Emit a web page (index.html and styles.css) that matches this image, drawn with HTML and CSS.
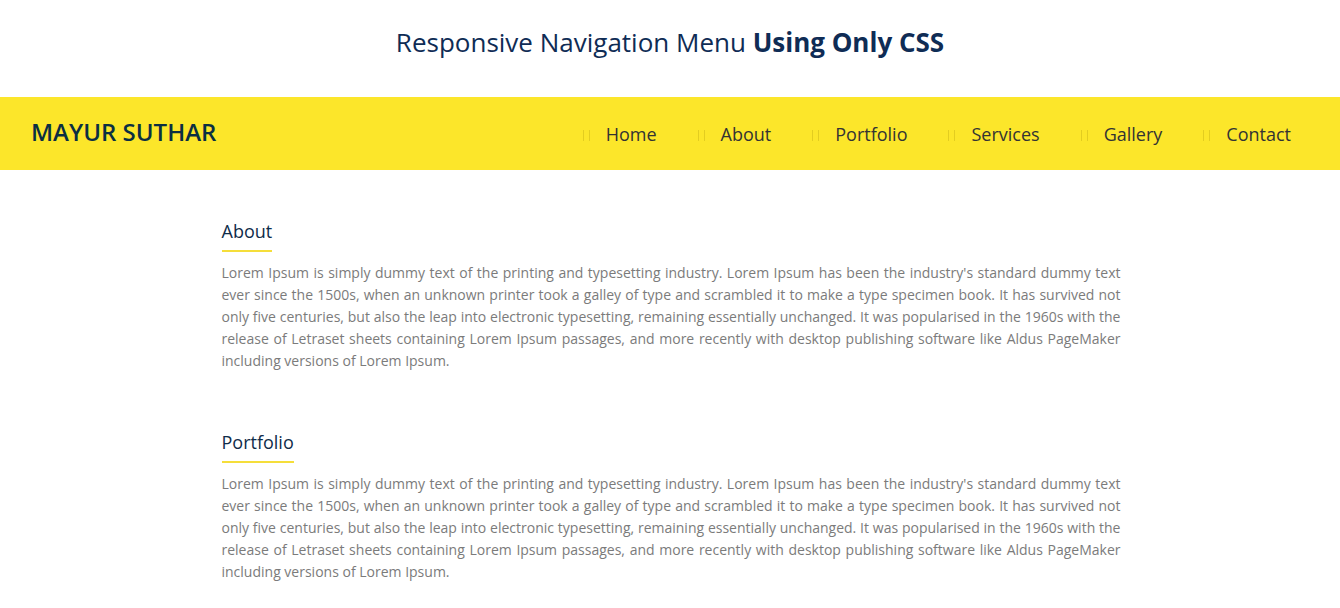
FILE: index.html
```html
<!DOCTYPE html>
<html lang="en">
<head>
<meta charset="utf-8">
<title>Responsive Navigation Menu</title>
<link rel="stylesheet" href="styles.css">
</head>
<body>
<h1 class="page-title">Responsive Navigation Menu <strong>Using Only CSS</strong></h1>
<nav class="navbar">
  <div class="logo">MAYUR SUTHAR</div>
  <ul class="menu">
    <li class="menu-item"><span class="sep"></span><a href="#">Home</a></li>
    <li class="menu-item"><span class="sep"></span><a href="#">About</a></li>
    <li class="menu-item"><span class="sep"></span><a href="#">Portfolio</a></li>
    <li class="menu-item"><span class="sep"></span><a href="#">Services</a></li>
    <li class="menu-item"><span class="sep"></span><a href="#">Gallery</a></li>
    <li class="menu-item"><span class="sep"></span><a href="#">Contact</a></li>
  </ul>
</nav>
<main class="content">
  <section class="section">
    <h2 class="section-title">About</h2>
    <p class="section-text">Lorem Ipsum is simply dummy text of the printing and typesetting industry. Lorem Ipsum has been the industry's standard dummy text ever since the 1500s, when an unknown printer took a galley of type and scrambled it to make a type specimen book. It has survived not only five centuries, but also the leap into electronic typesetting, remaining essentially unchanged. It was popularised in the 1960s with the release of Letraset sheets containing Lorem Ipsum passages, and more recently with desktop publishing software like Aldus PageMaker including versions of Lorem Ipsum.</p>
  </section>
  <section class="section">
    <h2 class="section-title">Portfolio</h2>
    <p class="section-text">Lorem Ipsum is simply dummy text of the printing and typesetting industry. Lorem Ipsum has been the industry's standard dummy text ever since the 1500s, when an unknown printer took a galley of type and scrambled it to make a type specimen book. It has survived not only five centuries, but also the leap into electronic typesetting, remaining essentially unchanged. It was popularised in the 1960s with the release of Letraset sheets containing Lorem Ipsum passages, and more recently with desktop publishing software like Aldus PageMaker including versions of Lorem Ipsum.</p>
  </section>
</main>
</body>
</html>
```

FILE: styles.css
```css
* { box-sizing: border-box; }
body {
  margin: 0;
  font-family: "Open Sans", "Noto Sans", sans-serif;
  background: #fff;
}
.page-title {
  margin: 0;
  padding: 24px 0 37px;
  text-align: center;
  font-size: 26px;
  line-height: 36px;
  font-weight: 400;
  color: #0f2c55;
}
.page-title strong { font-weight: 700; }
.navbar {
  height: 73px;
  background: #fce62a;
  display: flex;
  align-items: center;
  justify-content: space-between;
  padding: 0 49px 0 31px;
}
.logo {
  font-size: 24px;
  font-weight: 600;
  color: #0b2f42;
  line-height: 32px;
  margin-top: -4px;
}
.menu {
  list-style: none;
  margin: 0;
  padding: 0;
  display: flex;
  align-items: center;
}
.menu-item {
  display: flex;
  align-items: center;
  margin-left: 41px;
}
.menu-item:first-child { margin-left: 0; }
.menu-item a {
  text-decoration: none;
  color: #333;
  font-size: 18px;
  line-height: 24px;
}
.sep {
  width: 7px;
  height: 11px;
  border-left: 1px solid rgba(140, 120, 0, 0.22);
  border-right: 1px solid rgba(140, 120, 0, 0.22);
  margin-right: 16px;
  margin-top: 4px;
}
.content {
  width: 901px;
  margin: 0 auto;
  padding: 49px 0 0 2px;
}
.section { margin-bottom: 58px; }
.section-title {
  display: inline-block;
  margin: 0;
  font-size: 18px;
  line-height: 24px;
  font-weight: 400;
  color: #0f2c4a;
  padding-bottom: 7px;
  border-bottom: 2px solid #f5de3a;
}
.section-text {
  margin: 10px 0 0;
  font-size: 14px;
  line-height: 22px;
  color: #7b7b7b;
  text-align: justify;
}
```
